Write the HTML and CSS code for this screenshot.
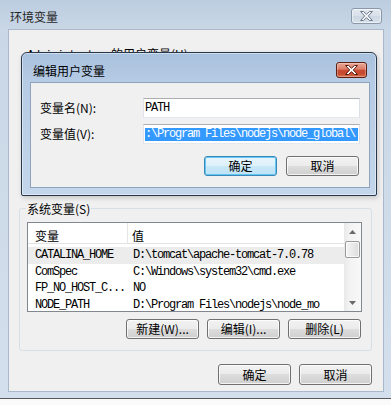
FILE: index.html
```html
<!DOCTYPE html>
<html lang="zh-CN">
<head>
<meta charset="utf-8">
<title>环境变量</title>
<link rel="stylesheet" href="styles.css">
</head>
<body>
<div class="screen">
  <div class="window">
    <div class="titlebar">
      <span class="title">环境变量</span>
      <span class="close close-inactive">
        <svg width="13" height="10" viewBox="0 0 13 10"><polygon points="0.5,0.5 3.5,0.5 6.5,3.2 9.5,0.5 12.5,0.5 8.3,5 12.5,9.5 9.5,9.5 6.5,6.8 3.5,9.5 0.5,9.5 4.7,5" fill="#eef2f6" stroke="#6f7c8c" stroke-width="1" stroke-linejoin="round"/></svg>
      </span>
    </div>
    <div class="client">
      <div class="user-section">
        <div class="section-label"><span class="m">Administrator </span>的用户变量(U)</div>
      </div>
      <div class="group">
        <div class="group-label">系统变量(S)</div>
        <div class="listview">
          <div class="lv-main">
            <div class="lv-head">
              <div class="c1">变量</div>
              <div class="c2">值</div>
            </div>
            <div class="lv-rows">
              <div class="lv-row selected m"><div class="c1">CATALINA_HOME</div><div class="c2">D:\tomcat\apache-tomcat-7.0.78</div></div>
              <div class="lv-row m"><div class="c1">ComSpec</div><div class="c2">C:\Windows\system32\cmd.exe</div></div>
              <div class="lv-row m"><div class="c1">FP_NO_HOST_C...</div><div class="c2">NO</div></div>
              <div class="lv-row m"><div class="c1">NODE_PATH</div><div class="c2">D:\Program Files\nodejs\node_mo</div></div>
            </div>
          </div>
          <div class="scrollbar">
            <div class="sb-btn"><svg width="7" height="4" viewBox="0 0 7 4"><polygon points="3.5,0 7,4 0,4" fill="#6a6a6a"/></svg></div>
            <div class="sb-thumb"></div>
            <div class="sb-track"></div>
            <div class="sb-btn"><svg width="7" height="4" viewBox="0 0 7 4"><polygon points="0,0 7,0 3.5,4" fill="#6a6a6a"/></svg></div>
          </div>
        </div>
        <div class="btn-row group-btns">
          <span class="btn">新建(W)...</span>
          <span class="btn">编辑(I)...</span>
          <span class="btn">删除(L)</span>
        </div>
      </div>
      <div class="btn-row main-btns">
        <span class="btn">确定</span>
        <span class="btn">取消</span>
      </div>
    </div>
  </div>
  <div class="taskbar"></div>

  <div class="dialog">
    <div class="dlg-titlebar">
      <span class="dlg-title">编辑用户变量</span>
      <span class="close close-red">
        <svg width="13" height="10" viewBox="0 0 13 10"><polygon points="0.5,0.5 3.5,0.5 6.5,3.2 9.5,0.5 12.5,0.5 8.3,5 12.5,9.5 9.5,9.5 6.5,6.8 3.5,9.5 0.5,9.5 4.7,5" fill="#ffffff" stroke="#5b1c10" stroke-width="1" stroke-linejoin="round"/></svg>
      </span>
    </div>
    <div class="dlg-client">
      <div class="form">
        <div class="label">变量名(N):</div>
        <div class="field m">PATH</div>
        <div class="label">变量值(V):</div>
        <div class="field m"><span class="sel">:\Program Files\nodejs\node_global\</span></div>
      </div>
      <div class="btn-row dlg-btns">
        <span class="btn btn-default">确定</span>
        <span class="btn">取消</span>
      </div>
    </div>
  </div>
</div>
</body>
</html>
```

FILE: styles.css
```css
* { box-sizing: border-box; }
html, body { margin: 0; padding: 0; }
body {
  width: 391px;
  height: 405px;
  overflow: hidden;
  background: #f4f4f4;
  font-family: "Noto Sans CJK SC", "Liberation Sans", sans-serif;
  font-size: 12px;
  color: #000;
}
.m {
  font-family: "Liberation Mono", "Noto Sans CJK SC", monospace;
  letter-spacing: -1.2px;
}
.screen { position: relative; width: 391px; height: 405px; overflow: hidden; }

/* outer window */
.window {
  height: 398px;
  display: flex;
  flex-direction: column;
  padding: 0 7px 6px 8px;
  background: linear-gradient(180deg, #bccde0 0, #c9d7e6 29px, #d3dfec 100%);
}
.titlebar {
  height: 29px;
  flex: none;
  display: flex;
  align-items: flex-start;
  justify-content: space-between;
}
.title { margin: 10px 0 0 2px; line-height: 14px; color: #262626; }
.close {
  display: flex;
  align-items: center;
  justify-content: center;
  width: 31px;
  height: 16px;
  border-radius: 3px;
}
.close-inactive {
  margin: 8px 2px 0 0;
  border: 1px solid #8a98aa;
  background: linear-gradient(#e3e9f0, #d8e0ea 50%, #ccd7e3 50%, #d8e1eb);
  box-shadow: inset 0 0 0 1px rgba(255, 255, 255, 0.5);
}
.client {
  flex: 1;
  border: 1px solid #aab8c9;
  background: #f0f0f0;
  padding: 0 11px 0 10px;
  display: flex;
  flex-direction: column;
}
.user-section { height: 178px; padding-top: 17px; flex: none; }
.section-label { margin-left: 8px; line-height: 14px; white-space: nowrap; }

.group {
  border: 1px solid #d5dfe5;
  border-radius: 3px;
  padding: 0 9px 11px 7px;
  display: flex;
  flex-direction: column;
  flex: none;
}
.group-label {
  align-self: flex-start;
  margin: -7px 0 0 -1px;
  padding: 0 1px;
  line-height: 14px;
  background: #f0f0f0;
}

/* list view */
.listview {
  margin-top: 6px;
  height: 90px;
  flex: none;
  border: 1px solid #828790;
  background: #fff;
  display: flex;
}
.lv-main { flex: 1; min-width: 0; display: flex; flex-direction: column; overflow: hidden; }
.lv-head { height: 21px; flex: none; display: flex; border-bottom: 1px solid #e3e3e3; }
.lv-head .c1 { width: 100px; padding: 6px 0 0 7px; line-height: 14px; border-right: 1px solid #e5e5e5; }
.lv-head .c2 { flex: 1; padding: 6px 0 0 4px; line-height: 14px; }
.lv-rows { padding-top: 3px; }
.lv-row { display: flex; height: 16.5px; line-height: 16.5px; white-space: nowrap; }
.lv-row .c1 { width: 100px; padding-left: 7px; flex: none; }
.lv-row .c2 { flex: 1; padding-left: 5px; overflow: hidden; }
.lv-row.selected { background: #ececec; }

.scrollbar {
  width: 17px;
  flex: none;
  display: flex;
  flex-direction: column;
  background: linear-gradient(90deg, #e9e9e9, #f3f3f3 35%, #f8f8f8);
}
.sb-btn { height: 17px; flex: none; display: flex; align-items: center; justify-content: center; }
.sb-thumb {
  height: 17px;
  flex: none;
  margin: 1px 1px 0;
  border: 1px solid #999;
  border-radius: 2px;
  background: linear-gradient(90deg, #f5f5f5, #e9e9e9 50%, #dcdcdc);
  box-shadow: inset 0 0 0 1px rgba(255, 255, 255, 0.7);
}
.sb-track { flex: 1; }

/* buttons */
.btn-row { display: flex; justify-content: flex-end; gap: 8px; flex: none; }
.group-btns { margin-top: 7px; padding-right: 1px; }
.main-btns { margin-top: 13px; }
.main-btns .btn { height: 21px; }
.btn {
  width: 73px;
  height: 20px;
  border: 1px solid #707070;
  border-radius: 3px;
  background: linear-gradient(#f2f2f2 0, #ebebeb 50%, #dddddd 50%, #cfcfcf 100%);
  box-shadow: inset 0 0 0 1px rgba(255, 255, 255, 0.75);
  display: flex;
  align-items: center;
  justify-content: center;
  line-height: 14px;
  white-space: nowrap;
}
.btn-default {
  border-color: #3c86b8;
  background: linear-gradient(#e8f5fc 0, #dcf0fb 50%, #c9e8f8 50%, #bde2f6 100%);
  box-shadow: inset 0 0 0 1px #62c8f3;
}
.taskbar { height: 7px; background: #fafafa; border-top: 1px solid #5a5a5a; }

/* edit dialog (over the window) */
.dialog {
  position: absolute;
  left: 21px;
  top: 52px;
  width: 356px;
  height: 144px;
  border: 1px solid #27374c;
  border-radius: 6px 6px 2px 2px;
  padding: 0 6px 7px 8px;
  background: linear-gradient(180deg, #a8c1de 0, #b6cbe4 29px, #c3d6eb 100%);
  box-shadow: inset 0 0 0 1px rgba(255, 255, 255, 0.45), 1px 2px 5px rgba(0, 0, 0, 0.18);
  display: flex;
  flex-direction: column;
}
.dlg-titlebar {
  height: 29px;
  flex: none;
  display: flex;
  align-items: flex-start;
  justify-content: space-between;
}
.dlg-title { margin: 11px 0 0 3px; line-height: 14px; }
.close-red {
  margin: 9px 3px 0 0;
  border: 1px solid #5e1f13;
  background: linear-gradient(#eaa897 0, #dc7c66 45%, #c94b31 50%, #c64a30 75%, #d8704f 100%);
  box-shadow: inset 0 0 0 1px rgba(255, 255, 255, 0.3);
}
.dlg-client {
  flex: 1;
  border: 1px solid #8ea3bd;
  background: #f0f0f0;
  padding: 15px 9px 11px 9px;
  display: flex;
  flex-direction: column;
}
.form {
  display: grid;
  grid-template-columns: 103px 1fr;
  grid-auto-rows: 20px;
  row-gap: 6px;
  align-items: center;
}
.label { line-height: 14px; }
.field {
  height: 20px;
  border: 1px solid #abadb3;
  border-left-color: #e2e3ea;
  border-right-color: #dbdfe6;
  border-bottom-color: #e3e9ef;
  background: #fff;
  padding: 0 1px;
  line-height: 18px;
  white-space: nowrap;
  overflow: hidden;
  display: flex;
  align-items: center;
}
.sel {
  display: inline-block;
  line-height: 13px;
  height: 13px;
  padding-right: 3px;
  background: #3399ff;
  color: #fff;
}
.dlg-btns { margin-top: 12px; gap: 9px; padding-right: 1px; }
```
